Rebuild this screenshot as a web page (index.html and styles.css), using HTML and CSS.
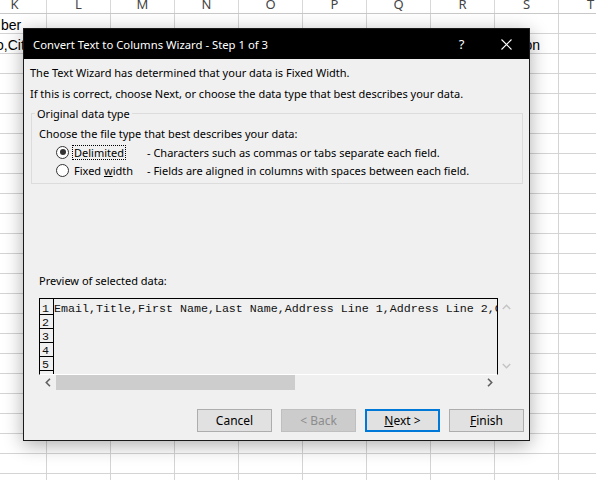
FILE: index.html
```html
<!DOCTYPE html>
<html lang="en">
<head>
<meta charset="utf-8">
<title>Convert Text to Columns Wizard</title>
<link rel="stylesheet" href="styles.css">
</head>
<body>
<div class="sheet">
  <div class="col-head">
    <span>K</span><span>L</span><span>M</span><span>N</span><span>O</span><span>P</span><span>Q</span><span>R</span><span>S</span><span>T</span>
  </div>
  <div class="cells">
    <div class="row"><span class="cell-text">ber</span></div>
    <div class="row"><span class="cell-text overflow-left">o,City,County,Postcode,Country</span><span class="cell-text">Region</span></div>
  </div>
</div>

<div class="dialog">
  <div class="titlebar">
    <span class="title">Convert Text to Columns Wizard - Step 1 of 3</span>
    <span class="tb-btn">?</span>
    <span class="tb-btn"><svg width="11" height="11" viewBox="0 0 11 11"><path d="M0.5 0.5L10.5 10.5M10.5 0.5L0.5 10.5" stroke="#fff" stroke-width="1.1" fill="none"/></svg></span>
  </div>
  <div class="body">
    <p class="intro">The Text Wizard has determined that your data is Fixed Width.</p>
    <p class="intro">If this is correct, choose Next, or choose the data type that best describes your data.</p>
    <fieldset class="group">
      <legend>Original data type</legend>
      <p class="choose">Choose the file type that best describes your data:</p>
      <div class="radio-row">
        <span class="radio checked"></span>
        <span class="rlabel"><span class="focus">Delimited</span></span>
        <span class="rdesc">- Characters such as commas or tabs separate each field.</span>
      </div>
      <div class="radio-row">
        <span class="radio"></span>
        <span class="rlabel"><span class="nofocus">Fixed <u>w</u>idth</span></span>
        <span class="rdesc">- Fields are aligned in columns with spaces between each field.</span>
      </div>
    </fieldset>
    <p class="preview-label">Preview of selected data:</p>
    <div class="preview">
      <div class="pv-box">
        <div class="pv-nums"><span>1</span><span>2</span><span>3</span><span>4</span><span>5</span><span>6</span></div>
        <div class="pv-text">Email,Title,First Name,Last Name,Address Line 1,Address Line 2,City,County</div>
      </div>
      <div class="vscroll">
        <svg width="9" height="6" viewBox="0 0 9 6"><path d="M0.8 5L4.5 1.3L8.2 5" stroke="#c4c4c4" stroke-width="1.5" fill="none"/></svg>
        <svg width="9" height="6" viewBox="0 0 9 6"><path d="M0.8 1L4.5 4.7L8.2 1" stroke="#c4c4c4" stroke-width="1.5" fill="none"/></svg>
      </div>
      <div class="hscroll">
        <span class="arrow"><svg width="6" height="9" viewBox="0 0 6 9"><path d="M5 0.8L1.3 4.5L5 8.2" stroke="#606060" stroke-width="1.6" fill="none"/></svg></span>
        <span class="track"><span class="thumb"></span></span>
        <span class="arrow"><svg width="6" height="9" viewBox="0 0 6 9"><path d="M1 0.8L4.7 4.5L1 8.2" stroke="#606060" stroke-width="1.6" fill="none"/></svg></span>
      </div>
      <div class="corner"></div>
    </div>
    <div class="buttons">
      <button class="btn">Cancel</button>
      <button class="btn disabled">&lt; Back</button>
      <button class="btn default"><u>N</u>ext &gt;</button>
      <button class="btn"><u>F</u>inish</button>
    </div>
  </div>
</div>
</body>
</html>
```

FILE: styles.css
```css
* { box-sizing: border-box; }

html, body {
  margin: 0;
  padding: 0;
}

body {
  width: 596px;
  height: 480px;
  overflow: hidden;
  position: relative;
  background: #fff;
  font-family: "Noto Sans", "Liberation Sans", sans-serif;
}

/* ---------- spreadsheet ---------- */
.sheet {
  width: 596px;
  height: 480px;
}

.col-head {
  display: flex;
  height: 14px;
  margin-left: -17px;
  border-bottom: 1px solid #c8c8c8;
  overflow: hidden;
}

.col-head span {
  flex: 0 0 64px;
  border-right: 1px solid #d8d8d8;
  text-align: center;
  font-size: 13px;
  line-height: 9px;
  color: #444;
}

.cells {
  height: 466px;
  background-image:
    linear-gradient(to right, #d4d4d4 1px, transparent 1px),
    linear-gradient(to bottom, transparent 19px, #d4d4d4 19px);
  background-size: 64px 100%, 100% 20px;
  background-position: 46px 0, 0 0;
}

.row {
  height: 20px;
  display: flex;
  justify-content: space-between;
  align-items: center;
  padding: 1px 56px 0 1px;
  white-space: nowrap;
  font-family: "Liberation Sans", sans-serif;
  font-size: 14px;
  color: #000;
}

.overflow-left {
  margin-left: -5px;
}

/* ---------- dialog ---------- */
.dialog {
  position: absolute;
  left: 23px;
  top: 28px;
  width: 507px;
  height: 413px;
  border: 1px solid #1a1a1a;
  background: #f0f0f0;
  box-shadow: 0 4px 18px rgba(0, 0, 0, 0.32);
  display: flex;
  flex-direction: column;
  font-size: 11px;
  color: #000;
}

.titlebar {
  height: 30px;
  flex: 0 0 30px;
  background: #000;
  color: #fff;
  display: flex;
  align-items: center;
  padding-left: 9px;
}

.title {
  flex: 1;
  font-size: 11.3px;
}

.tb-btn {
  width: 45px;
  height: 30px;
  display: flex;
  align-items: center;
  justify-content: center;
  font-size: 13px;
}

.body {
  flex: 1;
  display: flex;
  flex-direction: column;
  padding: 3px 5px 6px 6px;
}

.intro {
  margin: 0;
  line-height: 21px;
  white-space: nowrap;
}

.group {
  margin: 1px 1px 0 1px;
  padding: 0 0 3px 0;
  border: 1px solid #dcdcdc;
  min-inline-size: 0;
}

.group legend {
  margin-left: 3px;
  padding: 0 2px;
  line-height: 16px;
  position: relative;
  top: 1px;
}

.choose {
  margin: 4px 0 0 7px;
  line-height: 18px;
}

.radio-row {
  height: 18px;
  display: flex;
  align-items: center;
  padding-left: 24px;
  white-space: nowrap;
}

.radio-row + .radio-row {
  height: 19px;
}

.radio {
  width: 13px;
  height: 13px;
  flex: 0 0 13px;
  border: 1px solid #333;
  border-radius: 50%;
  background: #fff;
  display: flex;
  align-items: center;
  justify-content: center;
}

.radio.checked::after {
  content: "";
  width: 6px;
  height: 6px;
  border-radius: 50%;
  background: #333;
}

.rlabel {
  width: 72px;
  flex: 0 0 72px;
  margin-left: 3px;
}

.focus,
.nofocus {
  display: inline-block;
  padding: 0 1px;
  line-height: 13px;
  border: 1px dotted transparent;
}

.focus {
  border-color: #000;
}

.rdesc {
  margin-left: 3px;
}

.preview-label {
  margin: 88px 0 0 9px;
  line-height: 18px;
}

.preview {
  margin: 8px 0 0 9px;
  display: grid;
  grid-template-columns: 459px 17px;
  grid-template-rows: 77px 15px;
}

.pv-box {
  border: 1px solid #000;
  border-bottom-color: #fff;
  display: flex;
  overflow: hidden;
  font-family: "Liberation Mono", "DejaVu Sans Mono", monospace;
  font-size: 11.67px;
  color: #111;
}

.pv-nums {
  flex: 0 0 14px;
  border-right: 1px solid #000;
  padding-top: 2px;
  display: flex;
  flex-direction: column;
}

.pv-nums span {
  height: 14px;
  flex: 0 0 14px;
  border-bottom: 1px solid #000;
  padding: 3px 0 0 2px;
  line-height: 11px;
}

.pv-text {
  flex: 1;
  padding-top: 4px;
  line-height: 13px;
  white-space: pre;
  overflow: hidden;
}

.vscroll {
  display: flex;
  flex-direction: column;
  justify-content: space-between;
  align-items: center;
  padding: 6px 0 6px 0;
}

.hscroll {
  display: flex;
  align-items: stretch;
}

.arrow {
  flex: 0 0 17px;
  display: flex;
  align-items: center;
  justify-content: center;
}

.track {
  flex: 1;
  display: flex;
}

.thumb {
  width: 239px;
  background: #cdcdcd;
}

.buttons {
  margin-top: 19px;
  display: flex;
  justify-content: flex-end;
  gap: 9px;
}

.btn {
  width: 75px;
  height: 23px;
  padding: 0;
  border: 1px solid #adadad;
  background: #e1e1e1;
  font-family: inherit;
  font-size: 12px;
  color: #000;
}

.btn.disabled {
  background: #cccccc;
  border-color: #bfbfbf;
  color: #8c8c8c;
}

.btn.default {
  border: 2px solid #0078d7;
}
```
